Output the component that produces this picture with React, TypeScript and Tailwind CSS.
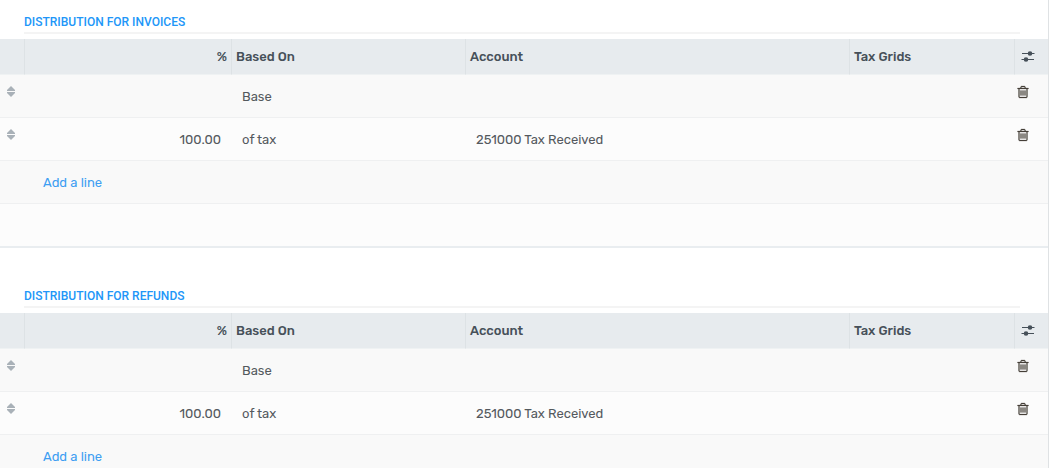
import React from "react";

type Line = { id: string; percent: string; basedOn: string; account: string; grids: string };

const lines: Line[] = [
  { id: "base", percent: "", basedOn: "Base", account: "", grids: "" },
  { id: "tax", percent: "100.00", basedOn: "of tax", account: "251000 Tax Received", grids: "" },
];

function SortHandle() {
  return (
    <svg viewBox="0 0 8 11" className="h-[11px] w-2" fill="currentColor" aria-hidden="true">
      <path d="M4 0 L8 4 V5 H0 V4 Z" />
      <path d="M0 6 H8 V7 L4 11 L0 7 Z" />
    </svg>
  );
}

function TrashIcon() {
  return (
    <svg viewBox="0 0 1792 1792" className="size-3.5" fill="currentColor" fillRule="evenodd" stroke="currentColor" strokeWidth="30" aria-hidden="true">
      <path d="M1600 416v64q0 14-9 23t-23 9h-96v948q0 83-47 143.500t-113 60.500h-832q-66 0-113-58.500t-47-141.500v-952h-96q-14 0-23-9t-9-23v-64q0-14 9-23t23-9h309l70-167q15-37 54-63t79-26h320q40 0 79 26t54 63l70 167h309q14 0 23 9t9 23zM672 384h448l-48-117q-7-9-17-11h-317q-10 2-17 11zM1344 1460v-948h-896v948q0 22 7 40.500t14.500 27 10.500 8.500h832q3 0 10.500-8.500t14.500-27 7-40.500zM704 736v576q0 14-9 23t-23 9h-64q-14 0-23-9t-9-23v-576q0-14 9-23t23-9h64q14 0 23 9t9 23zM960 736v576q0 14-9 23t-23 9h-64q-14 0-23-9t-9-23v-576q0-14 9-23t23-9h64q14 0 23 9t9 23zM1216 736v576q0 14-9 23t-23 9h-64q-14 0-23-9t-9-23v-576q0-14 9-23t23-9h64q14 0 23 9t9 23z" />
    </svg>
  );
}

function SlidersIcon() {
  return (
    <svg viewBox="0 0 14 12" className="h-3 w-3.5" aria-hidden="true">
      <path d="M1 2.500 H13.500 M0.500 8.500 H13" stroke="currentColor" strokeWidth="1.200" />
      <circle cx="9" cy="2.500" r="2.300" fill="currentColor" />
      <circle cx="5" cy="8.500" r="2.300" fill="currentColor" />
    </svg>
  );
}

const head = "border-l border-[#dde2e5] px-1 font-medium";
const cell = "pt-0.5 pr-2.5 pl-[11px]";

function Distribution({ title }: { title: string }) {
  return (
    <section>
      <h2 className="mr-7 ml-6 border-b-2 border-[#f4f4f4] pt-3 font-[Roboto,sans-serif] text-xs leading-5 font-medium text-[#2196f8] uppercase">
        {title}
      </h2>
      <table className="mt-[5px] w-full table-fixed border-separate border-spacing-0 border-b-2 border-[#e9edf0]">
        <colgroup>
          <col className="w-6" />
          <col className="w-[207px]" />
          <col className="w-[234px]" />
          <col />
          <col className="w-[165px]" />
          <col className="w-[34px]" />
        </colgroup>
        <thead>
          <tr className="h-9 bg-[#e7ebee] text-left text-[#465059] [&>th]:border-b [&>th]:border-b-[#eff2f3]">
            <th aria-label="Order" />
            <th className={`${head} text-right`}>%</th>
            <th className={head}>Based On</th>
            <th className={head}>Account</th>
            <th className={head}>Tax Grids</th>
            <th className="border-l border-[#dde2e5] p-0">
              <button type="button" aria-label="Optional columns" className="flex w-full justify-center pr-2">
                <SlidersIcon />
              </button>
            </th>
          </tr>
        </thead>
        <tbody>
          {lines.map((line) => (
            <tr key={line.id} className="h-[43px] odd:bg-[#f9f9f9] even:bg-[#fcfcfc] [&>td]:border-b [&>td]:border-[#eff0f1]">
              <td className="pt-[11px] pl-[7px] align-top text-[#a9b1b8]">
                <SortHandle />
              </td>
              <td className={`${cell} text-right`}>{line.percent}</td>
              <td className={cell}>{line.basedOn}</td>
              <td className={cell}>{line.account}</td>
              <td className={cell}>{line.grids}</td>
              <td className="pt-2.5 pl-[2px] align-top text-[#444039]">
                <button type="button" aria-label="Delete row" className="block">
                  <TrashIcon />
                </button>
              </td>
            </tr>
          ))}
          <tr className="h-[43px] bg-[#f9f9f9]">
            <td className="border-b border-[#eff0f1]" />
            <td colSpan={5} className="border-b border-[#eff0f1] px-[19px] pt-0.5">
              <a href="#add" className="text-[#3d9ef2]">Add a line</a>
            </td>
          </tr>
          <tr className="h-[42px] bg-[#fcfcfc]">
            <td colSpan={6} />
          </tr>
        </tbody>
      </table>
    </section>
  );
}

export default function App() {
  return (
    <main className="flex h-screen flex-col gap-[26px] overflow-hidden border-r border-[#dfe2e4] bg-white font-[Rubik,Roboto,sans-serif] text-[13px] text-[#54595e]">
      <Distribution title="Distribution for Invoices" />
      <Distribution title="Distribution for Refunds" />
    </main>
  );
}
